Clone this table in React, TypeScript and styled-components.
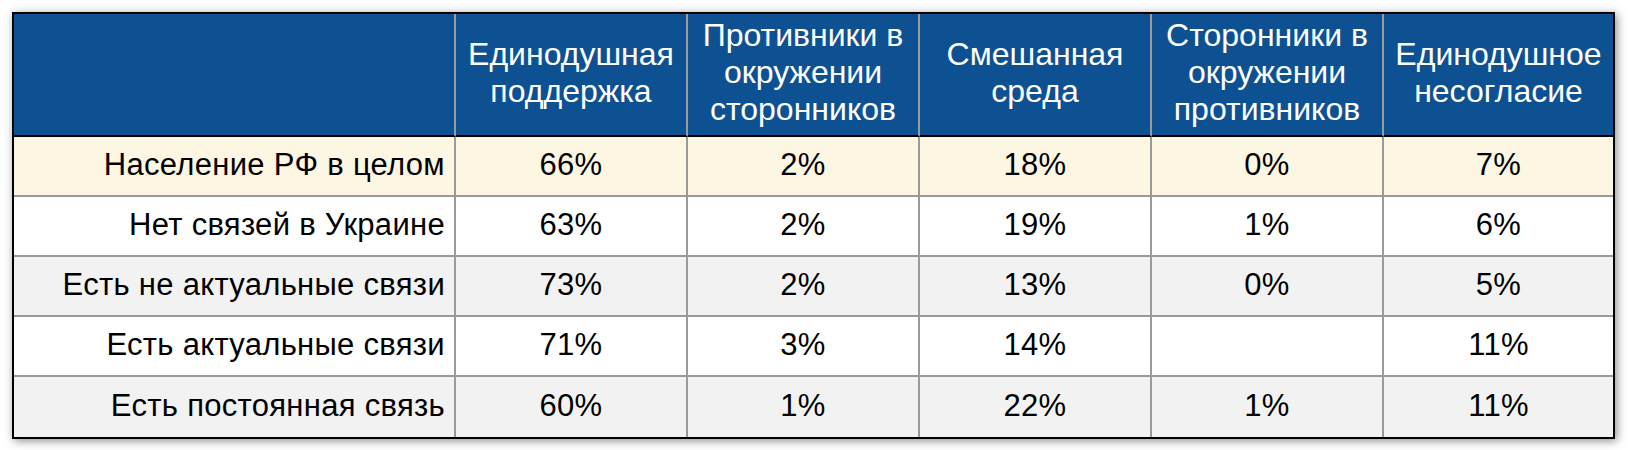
import React from 'react'
import styled, { createGlobalStyle } from 'styled-components'

const Global = createGlobalStyle`
  html, body {
    margin: 0;
    padding: 0;
    background: #ffffff;
  }
  * {
    box-sizing: border-box;
  }
`

const Page = styled.div`
  padding: 12px 13px 11px 12px;
  width: 1628px;
  height: 450px;
  font-family: 'Liberation Sans', Arial, sans-serif;
`

const Grid = styled.div`
  width: 1603px;
  display: grid;
  grid-template-columns: 442px repeat(4, 232px) 1fr;
  grid-template-rows: 123px repeat(5, 60px);
  border: 2px solid #000;
  box-shadow: 2px 2px 9px rgba(0, 0, 0, 0.45);
`

const HeadCell = styled.div<{ $last?: boolean }>`
  display: flex;
  flex-direction: column;
  align-items: center;
  justify-content: center;
  background: #0e5193;
  color: #ffffff;
  font-size: 32px;
  line-height: 37px;
  text-align: center;
  padding: 0 4px 4px;
  border-bottom: 2px solid #000;
  border-right: ${p => (p.$last ? '0' : '2px solid #9a9a9a')};
`

const Cell = styled.div<{ $label?: boolean; $bg: string; $last?: boolean; $bottom?: boolean }>`
  display: flex;
  align-items: center;
  justify-content: ${p => (p.$label ? 'flex-end' : 'center')};
  background: ${p => p.$bg};
  font-size: 31px;
  letter-spacing: 0.3px;
  color: #000;
  padding: 0 ${p => (p.$label ? '9px' : '0')} 3px 0;
  border-bottom: ${p => (p.$bottom ? '0' : '2px solid #9a9a9a')};
  border-right: ${p => (p.$last ? '0' : '2px solid #9a9a9a')};
  white-space: nowrap;
`

const headers = [
  ['Единодушная', 'поддержка'],
  ['Противники в', 'окружении', 'сторонников'],
  ['Смешанная', 'среда'],
  ['Сторонники в', 'окружении', 'противников'],
  ['Единодушное', 'несогласие'],
]

const rows: { label: string; bg: string; values: string[] }[] = [
  { label: 'Население РФ в целом', bg: '#fdf6e3', values: ['66%', '2%', '18%', '0%', '7%'] },
  { label: 'Нет связей в Украине', bg: '#ffffff', values: ['63%', '2%', '19%', '1%', '6%'] },
  { label: 'Есть не актуальные связи', bg: '#f2f2f2', values: ['73%', '2%', '13%', '0%', '5%'] },
  { label: 'Есть актуальные связи', bg: '#ffffff', values: ['71%', '3%', '14%', '', '11%'] },
  { label: 'Есть постоянная связь', bg: '#f2f2f2', values: ['60%', '1%', '22%', '1%', '11%'] },
]

export default function App() {
  return (
    <>
      <Global />
      <Page>
        <Grid>
          <HeadCell />
          {headers.map((lines, i) => (
            <HeadCell key={i} $last={i === headers.length - 1}>
              {lines.map((l, j) => (
                <span key={j}>{l}</span>
              ))}
            </HeadCell>
          ))}
          {rows.map((r, ri) => {
            const bottom = ri === rows.length - 1
            return (
              <React.Fragment key={r.label}>
                <Cell $label $bg={r.bg} $bottom={bottom}>
                  {r.label}
                </Cell>
                {r.values.map((v, i) => (
                  <Cell key={i} $bg={r.bg} $bottom={bottom} $last={i === r.values.length - 1}>
                    {v}
                  </Cell>
                ))}
              </React.Fragment>
            )
          })}
        </Grid>
      </Page>
    </>
  )
}
